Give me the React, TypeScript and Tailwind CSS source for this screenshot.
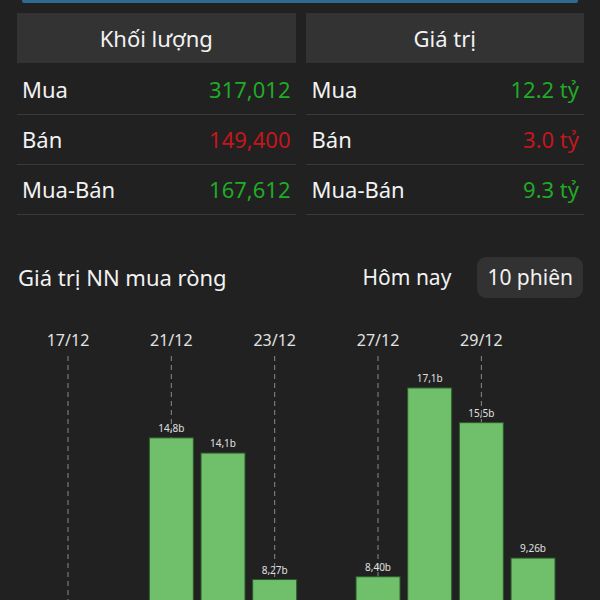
import React from "react";

const font = { fontFamily: '"Noto Sans", "Open Sans", sans-serif' };

type Row = { label: string; value: string; color: string };

const GREEN = "text-[#20aa26]";
const RED = "text-[#c4161d]";

function Table({ title, rows, pl, pr }: { title: string; rows: Row[]; pl: string; pr: string }) {
  return (
    <div className="flex flex-col">
      <div className="h-[50px] bg-[#333333] flex items-center justify-center text-[22px] text-[#f2f2f2]">
        {title}
      </div>
      <div className="mt-[2px] flex flex-col">
        {rows.map((r) => (
          <div
            key={r.label}
            className={`h-[50px] flex items-center justify-between border-b border-[#3a3a3a] text-[22px] ${pl} ${pr}`}
          >
            <span className="text-[#f2f2f2]">{r.label}</span>
            <span className={r.color}>{r.value}</span>
          </div>
        ))}
      </div>
    </div>
  );
}

const bars: { slot: number; v: number; label: string }[] = [
  { slot: 2, v: 14.8, label: "14,8b" },
  { slot: 3, v: 14.1, label: "14,1b" },
  { slot: 4, v: 8.27, label: "8,27b" },
  { slot: 6, v: 8.4, label: "8,40b" },
  { slot: 7, v: 17.1, label: "17,1b" },
  { slot: 8, v: 15.5, label: "15,5b" },
  { slot: 9, v: 9.26, label: "9,26b" },
];

const dates = [
  { slot: 0, t: "17/12" },
  { slot: 2, t: "21/12" },
  { slot: 4, t: "23/12" },
  { slot: 6, t: "27/12" },
  { slot: 8, t: "29/12" },
];

function Chart() {
  const top = 298;
  const cx = (i: number) => 68 + i * 51.67;
  const baseline = 759;
  const k = 21.7;
  return (
    <svg width={600} height={302} viewBox={`0 ${top} 600 302`} className="block">
      {dates.map((d) => (
        <g key={d.t}>
          <text
            x={cx(d.slot)}
            y={346}
            textAnchor="middle"
            fontSize={16}
            fill="#e2e2e2"
            style={font}
          >
            {d.t}
          </text>
          <line
            x1={cx(d.slot)}
            x2={cx(d.slot)}
            y1={356}
            y2={600}
            stroke="#8a8a8a"
            strokeWidth={1}
            strokeDasharray="5 4"
          />
        </g>
      ))}
      {bars.map((b) => {
        const y = baseline - b.v * k;
        return (
          <g key={b.label}>
            <rect
              x={cx(b.slot) - 22}
              y={y}
              width={44}
              height={baseline - y}
              fill="#6fbf6b"
              stroke="#2a5a28"
              strokeWidth={1}
            />
            <text
              x={cx(b.slot)}
              y={y - 6}
              textAnchor="middle"
              fontSize={10}
              fill="#e0e0e0"
              style={font}
            >
              {b.label}
            </text>
          </g>
        );
      })}
    </svg>
  );
}

export default function App() {
  return (
    <div className="w-[600px] h-[600px] bg-[#212121] overflow-hidden" style={font}>
      <div className="mx-[22px] h-[3px] bg-[#2d6b90] rounded-b-[2px]" />
      <div className="mt-[10px] grid grid-cols-2 gap-[10px] pl-[17px] pr-[16px]">
        <Table
          title="Khối lượng"
          pl="pl-[5px]"
          pr="pr-[5px]"
          rows={[
            { label: "Mua", value: "317,012", color: GREEN },
            { label: "Bán", value: "149,400", color: RED },
            { label: "Mua-Bán", value: "167,612", color: GREEN },
          ]}
        />
        <Table
          title="Giá trị"
          pl="pl-[6px]"
          pr="pr-[5px]"
          rows={[
            { label: "Mua", value: "12.2 tỷ", color: GREEN },
            { label: "Bán", value: "3.0 tỷ", color: RED },
            { label: "Mua-Bán", value: "9.3 tỷ", color: GREEN },
          ]}
        />
      </div>
      <div className="mt-[42px] h-[41px] flex items-center pl-[18px] pr-[17px]">
        <span className="text-[22px] text-[#f2f2f2]">Giá trị NN mua ròng</span>
        <span className="ml-auto text-[21px] text-[#f2f2f2]">Hôm nay</span>
        <span className="ml-[26px] h-[41px] px-[10px] flex items-center rounded-[9px] bg-[#323232] text-[21px] text-[#f2f2f2]">
          10 phiên
        </span>
      </div>
      <Chart />
    </div>
  );
}
